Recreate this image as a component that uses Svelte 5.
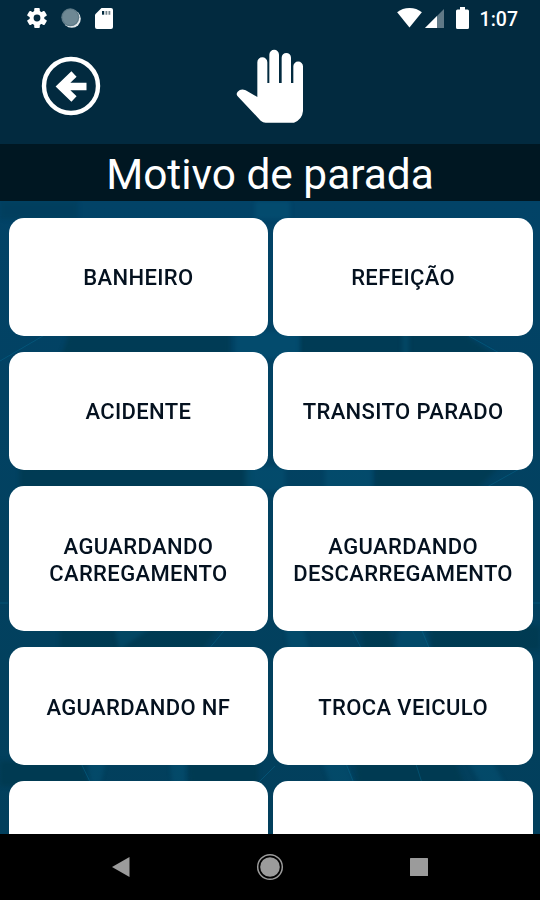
<script lang="ts">
	const reasons = [
		'BANHEIRO',
		'REFEIÇÃO',
		'ACIDENTE',
		'TRANSITO PARADO',
		'AGUARDANDO CARREGAMENTO',
		'AGUARDANDO DESCARREGAMENTO',
		'AGUARDANDO NF',
		'TROCA VEICULO',
		'',
		''
	];
</script>

<div class="screen">
	<div class="status">
		<div class="status-group left">
			<svg width="20" height="20" viewBox="0 0 20 20" aria-hidden="true">
				<g fill="#fff">
					<circle cx="10" cy="10" r="7.4" />
					{#each [0, 60, 120] as angle}
						<rect x="7.2" y="0" width="5.6" height="20" rx="1" transform="rotate({angle} 10 10)" />
					{/each}
				</g>
				<circle cx="10" cy="10" r="3.4" fill="#022a3f" />
			</svg>
			<svg width="20" height="20" viewBox="0 0 20 20" aria-hidden="true">
				<circle cx="10.8" cy="10.8" r="9" fill="#e2e8eb" />
				<circle cx="9.3" cy="9.3" r="9" fill="#5d7986" />
				<circle cx="9.3" cy="9.3" r="7.8" fill="#6e8894" />
			</svg>
			<svg width="18" height="21" viewBox="0 0 18 21" aria-hidden="true">
				<path d="M6.5 0H16q2 0 2 2v17q0 2-2 2H2q-2 0-2-2V6.5z" fill="#fff" />
				<path d="M7 3h2.2v3.7H7z" fill="#022a3f" />
				<path d="M10.5 3h1.8v3.7h-1.8zM13.5 3h1.8v3.7h-1.8z" fill="#73848c" />
			</svg>
		</div>
		<div class="status-group right">
			<svg class="wifi" width="25" height="20" viewBox="0 0 26 21" aria-hidden="true">
				<path d="M13 20.5L0 4.5Q5.5 0 13 0t13 4.5z" fill="#fff" />
			</svg>
			<svg class="signal" width="19" height="19" viewBox="0 0 19 19" aria-hidden="true">
				<path d="M0 19L19 0v19z" fill="#607987" />
				<path d="M0 19L12 7v12z" fill="#fff" />
			</svg>
			<svg class="battery" width="13" height="22" viewBox="0 0 13 22" aria-hidden="true">
				<path d="M4 0h5v2.5h2.5q1.5 0 1.5 1.5v16.5q0 1.5-1.5 1.5h-10Q0 22 0 20.5V4q0-1.5 1.5-1.5H4z" fill="#fff" />
			</svg>
			<span class="clock">1:07</span>
		</div>
	</div>

	<header>
		<button class="back" aria-label="Voltar">
			<svg width="60" height="60" viewBox="0 0 60 60" aria-hidden="true">
				<circle cx="30" cy="30" r="27" fill="none" stroke="#fff" stroke-width="4.4" />
				<path d="M33 18L20 30.5 33 43M19 30.5h26.5" fill="none" stroke="#fff" stroke-width="7.5" />
			</svg>
		</button>
		<svg class="hand" width="70" height="76" viewBox="45 25 210 228" aria-hidden="true">
			<path
				d="M112 172V68a15 15 0 0 1 30 0v62h6V45a14.5 14.5 0 0 1 29 0v85h8V54a14 14 0 0 1 28 0v76h7V80a14.5 14.5 0 0 1 29 0v134q-2 25-27 35h-85q-8 0-15-6L53 170q-6-7 0-14 10-11 24-4z"
				fill="#fff"
			/>
		</svg>
	</header>

	<h1>Motivo de parada</h1>

	<main>
		<svg class="backdrop" width="540" height="633" viewBox="0 0 540 633" aria-hidden="true">
			<!-- dark patches -->
			<g class="soft" fill="#00384b" opacity="0.6">
				<path d="M0 0h78v18H0z" opacity="0.5" />
				<path d="M70 130h160v28H60zM300 130h160l40 28H300z" />
				<path d="M20 265h230v25H20zM375 265h125l-25 25H375z" />
				<path d="M60 425h160l-18 24H60zM360 425h28l6 24h-30zM430 425h110v24H432z" />
				<path d="M0 560h80l10 25H0zM188 560h70v25h-68zM355 560h100l10 25H358z" />
			</g>
			<!-- light patches -->
			<g class="soft" fill="#07587b" opacity="0.42">
				<path d="M255 0h35v18h-35zM235 130h65v28h-65zM402 130h7v28h-7z" />
				<path d="M245 265h40v25h-40zM325 265h47v25h-47z" />
				<path d="M114 425h40l-35 24zM285 425h18l6 24h-20zM400 425h24l7 24h-36z" />
				<path d="M88 560h18l-6 25H90zM170 560h16v25h-14zM322 560h24l9 25h-24zM468 560h24l14 25h-24z" />
			</g>
			<g fill="none" stroke="#087098" opacity="0.4">
				<path d="M0 160l60-35M460 130l50 28M480 290l50-28M350 425l12 24M420 425l10 24M208 449l20-24" />
				<path d="M80 560l12 25M415 560l8 25M345 560l10 25M0 402h8M533 402h7M255 585l20-20" />
			</g>
		</svg>
		<div class="grid">
			{#each reasons as reason}
				<button class="card">{reason}</button>
			{/each}
		</div>
	</main>

	<nav>
		<svg width="18" height="20" viewBox="0 0 18 20" aria-hidden="true">
			<path d="M0 10L17.5 0v20z" fill="#9b9b9b" />
		</svg>
		<svg width="28" height="28" viewBox="0 0 28 28" aria-hidden="true">
			<circle cx="14" cy="14" r="12.3" fill="none" stroke="#9b9b9b" stroke-width="1.5" />
			<circle cx="14" cy="14" r="9.8" fill="#9b9b9b" />
		</svg>
		<svg width="18" height="18" viewBox="0 0 18 18" aria-hidden="true">
			<rect width="18" height="18" rx="0.5" fill="#9b9b9b" />
		</svg>
	</nav>
</div>

<style>
	:global(body) {
		margin: 0;
		background-color: #000;
	}

	.screen {
		width: 540px;
		height: 900px;
		display: flex;
		flex-direction: column;
		overflow: hidden;
		background-color: #022a3f;
		font-family: Roboto, sans-serif;
	}

	svg {
		display: block;
		flex: none;
	}

	button {
		border: none;
		padding: 0;
		font-family: inherit;
	}

	.status {
		height: 36px;
		display: flex;
		justify-content: space-between;
		align-items: center;
		padding: 0 22px 0 27px;
		box-sizing: border-box;
	}

	.status-group {
		display: flex;
		align-items: center;
	}

	.left {
		gap: 14px;
	}

	.wifi {
		margin-right: 3px;
	}

	.signal {
		margin-right: 12px;
	}

	.battery {
		margin-right: 11px;
	}

	.clock {
		color: #fff;
		font-size: 19.5px;
		font-weight: 500;
		line-height: 32px;
		padding-top: 3px;
	}

	header {
		height: 108px;
		display: grid;
		grid-template-columns: 1fr auto 1fr;
		padding: 0 41px;
		box-sizing: border-box;
	}

	.back {
		width: 60px;
		height: 60px;
		margin-top: 20px;
		background: none;
	}

	.hand {
		margin-top: 12px;
	}

	h1 {
		height: 57px;
		flex: none;
		margin: 0;
		background-color: #001722;
		color: #fff;
		font-size: 42.4px;
		font-weight: 400;
		line-height: 62px;
		text-align: center;
	}

	main {
		position: relative;
		height: 633px;
		flex: none;
		overflow: hidden;
		background: linear-gradient(#024367, #02415f 60%, #023f5c);
	}

	.backdrop {
		position: absolute;
		top: 0;
		left: 0;
	}

	.soft {
		filter: blur(2px);
	}

	.grid {
		position: relative;
		display: grid;
		grid-template-columns: 1fr 1fr;
		grid-template-rows: 118px 118px 145px 118px 118px;
		gap: 16.2px 5px;
		padding: 16.5px 7px 0 8.5px;
	}

	.card {
		background-color: #fff;
		color: #04111f;
		border-radius: 15px;
		font-size: 22px;
		font-weight: 500;
		line-height: 27px;
		letter-spacing: 0.37px;
		padding: 2.4px 16px 0;
	}

	nav {
		height: 66px;
		display: flex;
		justify-content: space-between;
		align-items: center;
		padding: 0 112px;
		box-sizing: border-box;
		background-color: #000;
	}
</style>
